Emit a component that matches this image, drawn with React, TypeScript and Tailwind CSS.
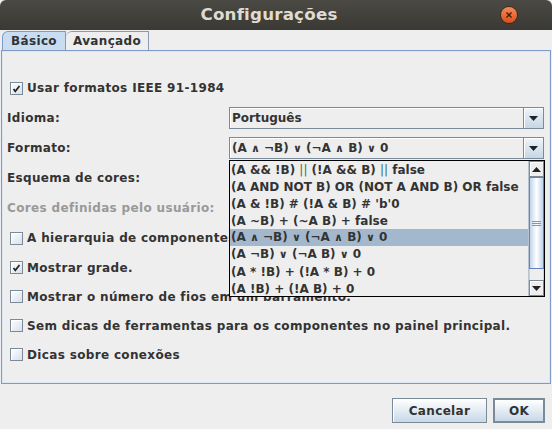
import React from "react";

const font = { fontFamily: '"DejaVu Sans", "Liberation Sans", sans-serif' };

function CheckBox({ checked, label }: { checked?: boolean; label: string }) {
  return (
    <div className="flex h-full items-center whitespace-nowrap pl-[7px]">
      <div className="flex h-[13px] w-[13px] items-center justify-center border border-[#7a8a99] bg-gradient-to-br from-white to-[#d8e0ea] shadow-[inset_1px_1px_0_#fff]">
        {checked ? (
          <svg width="9" height="9" viewBox="0 0 9 9">
            <path d="M1.5 5 L3.3 7.3 L7.5 2" stroke="#222" strokeWidth="1.7" fill="none" />
          </svg>
        ) : null}
      </div>
      <span className="ml-[4px] text-[12px] font-bold tracking-[0.34px] text-[#333]">{label}</span>
    </div>
  );
}

function ArrowDown() {
  return (
    <svg width="9" height="5" viewBox="0 0 9 5">
      <path d="M0 0 H9 L4.5 5 Z" fill="#222" />
    </svg>
  );
}

function ArrowUp() {
  return (
    <svg width="9" height="5" viewBox="0 0 9 5">
      <path d="M0 5 H9 L4.5 0 Z" fill="#222" />
    </svg>
  );
}

// small logic glyphs, drawn narrower than the default font gives them
function And() {
  return <span className="text-[11px]">∧</span>;
}
function Or() {
  return <span className="text-[11px]">∨</span>;
}

function Combo({ value }: { value: React.ReactNode }) {
  return (
    <div className="flex h-[22px] w-[315px] border border-[#7a8a99] bg-[#eeeeee]">
      <div className="flex flex-1 items-center border-r border-[#7a8a99] pl-[2px] text-[12px] font-bold text-[#333] shadow-[inset_1px_1px_0_#fff]">
        <span>{value}</span>
      </div>
      <div className="flex w-[19px] items-center justify-center bg-gradient-to-b from-[#eef4fb] to-[#c6d6e6] shadow-[inset_1px_1px_0_#fff]">
        <ArrowDown />
      </div>
    </div>
  );
}

const selected = (
  <span>
    (A <And /> ¬B) <Or /> (¬A <And /> B) <Or /> 0
  </span>
);

const options: React.ReactNode[] = [
  <span>
    (A &amp;&amp; !B) <span className="font-normal text-[#3b6f5a]">||</span> (!A &amp;&amp; B){" "}
    <span className="font-normal text-[#3b6f5a]">||</span> false
  </span>,
  "(A AND NOT B) OR (NOT A AND B) OR false",
  "(A & !B) # (!A & B) # 'b'0",
  "(A ~B) + (~A B) + false",
  selected,
  <span>
    (A ¬B) <Or /> (¬A B) <Or /> 0
  </span>,
  "(A * !B) + (!A * B) + 0",
  "(A !B) + (!A B) + 0",
];

export default function App() {
  return (
    <div className="flex h-[429px] w-[552px] flex-col overflow-hidden bg-[#eeeeee]" style={font}>
      {/* title bar */}
      <div className="relative flex h-[30px] shrink-0 items-center justify-center rounded-t-[6px] bg-gradient-to-b from-[#4a4944] to-[#3a3935] pr-[14px]">
        <span className="text-[16.7px] font-bold tracking-[0.2px] text-[#dfdbd2]">Configurações</span>
        <div className="absolute right-[35px] top-[7px] flex h-[16px] w-[16px] items-center justify-center rounded-full bg-gradient-to-b from-[#f58a55] to-[#db4d17] shadow-[0_0_0_1px_#3a2a20]">
          <svg width="6" height="6" viewBox="0 0 6 6">
            <path d="M0.5 0.5 L5.5 5.5 M5.5 0.5 L0.5 5.5" stroke="#3b1d0c" strokeWidth="1.3" />
          </svg>
        </div>
      </div>

      {/* tabs */}
      <div className="flex h-[20px] shrink-0 items-end pl-[2px] pt-[1px]">
        <div className="flex h-[19px] w-[64px] items-center justify-center rounded-tl-[6px] border border-b-0 border-[#7f9ac6] bg-[#c8ddf2] text-[12px] font-bold tracking-[0.34px] text-[#333]">
          Básico
        </div>
        <div className="flex h-[19px] w-[83px] items-center justify-center rounded-tl-[6px] border border-b-0 border-l-0 border-[#8a99b0] bg-[#eeeeee] text-[12px] font-bold tracking-[0.34px] text-[#333]">
          Avançado
        </div>
      </div>

      {/* panel */}
      <div className="relative mx-[1px] h-[334px] shrink-0 border border-[#7f9ac6]">
        <div className="flex h-full flex-col border border-[#dde6f3] pt-[21px]">
          <div className="h-[30px]">
            <CheckBox checked label="Usar formatos IEEE 91-1984" />
          </div>
          <div className="flex h-[30px] items-center justify-between pl-[4px] pr-[5px]">
            <span className="text-[12px] font-bold tracking-[0.34px] text-[#333]">Idioma:</span>
            <Combo value="Português" />
          </div>
          <div className="flex h-[30px] items-center justify-between pl-[4px] pr-[5px]">
            <span className="text-[12px] font-bold tracking-[0.34px] text-[#333]">Formato:</span>
            <Combo value={selected} />
          </div>
          <div className="flex h-[30px] items-center pl-[4px]">
            <span className="text-[12px] font-bold tracking-[0.34px] text-[#333]">Esquema de cores:</span>
          </div>
          <div className="flex h-[30px] items-center pl-[4px]">
            <span className="text-[12px] font-bold tracking-[0.34px] text-[#999]">Cores definidas pelo usuário:</span>
          </div>
          <div className="h-[30px]">
            <CheckBox label="A hierarquia de componentes será mostrada." />
          </div>
          <div className="h-[29px]">
            <CheckBox checked label="Mostrar grade." />
          </div>
          <div className="h-[29px]">
            <CheckBox label="Mostrar o número de fios em um barramento." />
          </div>
          <div className="h-[29px]">
            <CheckBox label="Sem dicas de ferramentas para os componentes no painel principal." />
          </div>
          <div className="h-[29px]">
            <CheckBox label="Dicas sobre conexões" />
          </div>
        </div>

        {/* dropdown popup */}
        <div className="absolute left-[227px] top-[109px] z-10 flex h-[137px] w-[316px] border border-black bg-[#eeeeee]">
          <div className="flex flex-1 flex-col overflow-hidden">
            {options.map((o, i) => (
              <div
                key={i}
                className={
                  "flex h-[17px] items-center whitespace-nowrap pl-[1px] text-[12px] font-bold text-[#333] " +
                  (i === 4 ? "bg-[#a3b8cc]" : "")
                }
              >
                {o}
              </div>
            ))}
          </div>
          <div className="flex w-[16px] flex-col border-l border-[#b8c4d0] bg-[#eeeeee]">
            <div className="flex h-[16px] items-center justify-center border border-[#7a8a99] bg-[#eeeeee] shadow-[inset_1px_1px_0_#fff]">
              <ArrowUp />
            </div>
            <div className="flex h-[92px] items-center justify-center border border-[#6382bf] bg-gradient-to-r from-[#c0d4ec] via-white to-[#c0d4ec]">
              <div className="flex flex-col gap-[1px]">
                <div className="h-[1px] w-[9px] bg-[#7a96c8]" />
                <div className="h-[1px] w-[9px] bg-[#7a96c8]" />
                <div className="h-[1px] w-[9px] bg-[#7a96c8]" />
              </div>
            </div>
            <div className="flex-1 border-x border-[#c8d0d8]" />
            <div className="flex h-[16px] items-center justify-center border border-[#7a8a99] bg-[#eeeeee] shadow-[inset_1px_1px_0_#fff]">
              <ArrowDown />
            </div>
          </div>
        </div>
      </div>

      {/* buttons */}
      <div className="flex flex-1 items-start justify-end gap-[6px] pr-[7px] pt-[14px]">
        <button className="h-[25px] w-[95px] border border-[#7a8a99] bg-gradient-to-b from-white to-[#c8d8e8] text-[12px] font-bold tracking-[0.34px] text-[#333] shadow-[inset_1px_1px_0_#fff]">
          Cancelar
        </button>
        <button className="h-[25px] w-[52px] border-2 border-[#7a8a99] bg-gradient-to-b from-white to-[#c8d8e8] text-[12px] font-bold tracking-[0.34px] text-[#333]">
          OK
        </button>
      </div>
    </div>
  );
}
